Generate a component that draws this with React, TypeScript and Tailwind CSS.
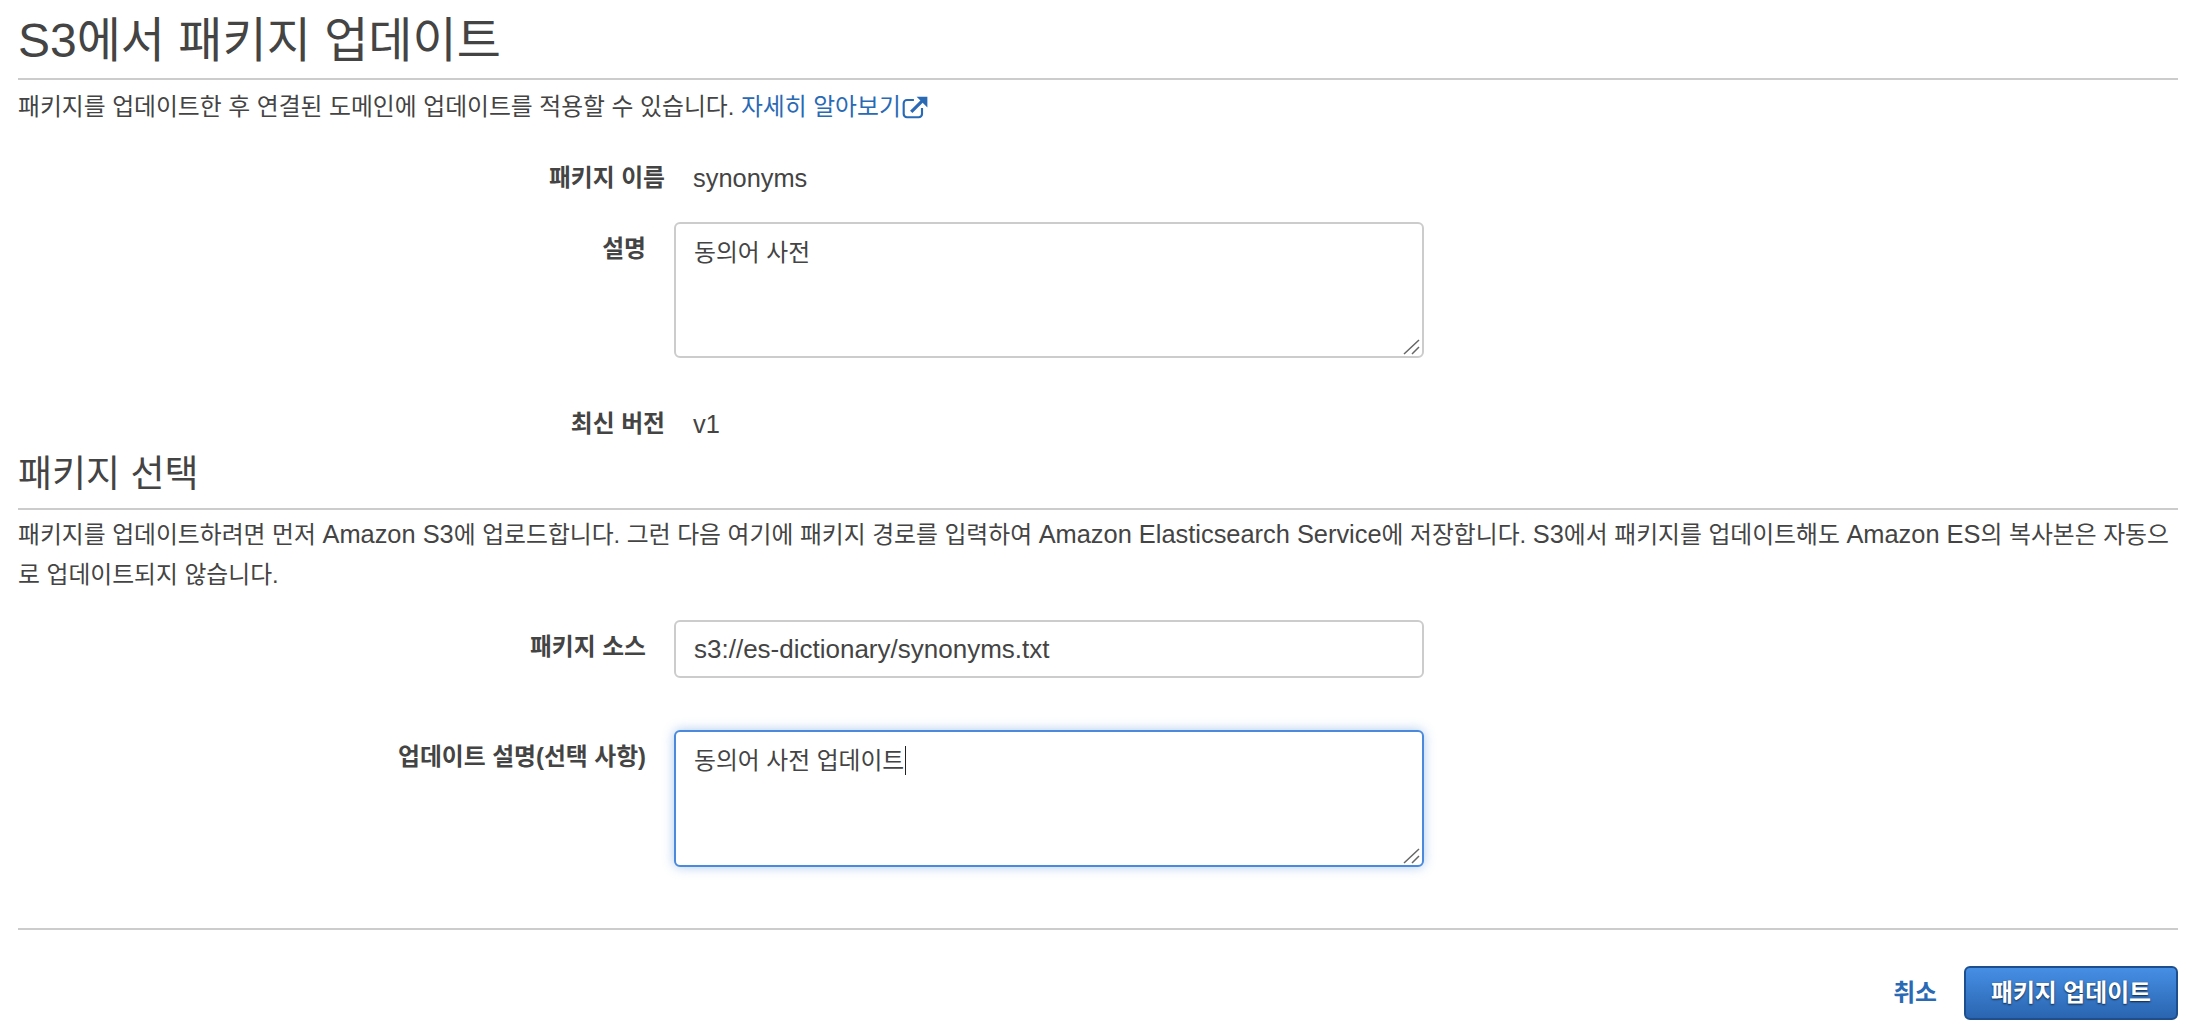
import React from 'react';

const FONT = 'font-["Liberation_Sans","Noto_Sans_CJK_KR",sans-serif]';

function ExternalIcon() {
  return (
    <svg viewBox="0 0 26 24" className="inline-block h-[26px] w-[28px] align-[-5px]" fill="none">
      <path d="M12 5.5H5.5a3 3 0 0 0-3 3v10a3 3 0 0 0 3 3h11a3 3 0 0 0 3-3V13" stroke="#2a6ab5" strokeWidth="2" />
      <path d="M9.5 16.5 20 6" stroke="#2a6ab5" strokeWidth="3" />
      <path d="M14.5 2.5h10v10z" fill="#2a6ab5" />
    </svg>
  );
}

function ResizeGrip() {
  return (
    <svg viewBox="0 0 18 16" className="pointer-events-none absolute right-[3px] bottom-[3px] h-[16px] w-[18px]" fill="none">
      <path d="M1 15 16 1M9 15l7-7" stroke="#666" strokeWidth="1.5" />
    </svg>
  );
}

function Latin({ children }: { children: React.ReactNode }) {
  return <span className="text-[25.4px]">{children}</span>;
}

function StaticRow({ label, value, className }: { label: string; value: string; className?: string }) {
  return (
    <div className={`flex items-center ${className ?? ''}`}>
      <div className="w-[647px] text-right font-bold">{label}</div>
      <div className="ml-[28px] text-[25.4px]">{value}</div>
    </div>
  );
}

function FieldRow({ label, children, className }: { label: string; children: React.ReactNode; className?: string }) {
  return (
    <div className={`flex items-start ${className ?? ''}`}>
      <div className="w-[628px] pt-[13px] text-right font-bold leading-[28px]">{label}</div>
      <div className="relative ml-[28px] w-[750px]">{children}</div>
    </div>
  );
}

export default function App() {
  return (
    <div className={`${FONT} h-[1034px] w-[2196px] overflow-hidden bg-white px-[18px] text-[23.8px] leading-[28px] text-[#444]`}>
      <h1 className="h-[80px] border-b-2 border-[#ccc] pt-[13px] text-[48px] leading-[56px] font-normal">S3에서 패키지 업데이트</h1>
      <p className="mt-[13px]">
        패키지를 업데이트한 후 연결된 도메인에 업데이트를 적용할 수 있습니다.{' '}
        <a className="text-[#2a6ab5]">자세히 알아보기<ExternalIcon /></a>
      </p>

      <StaticRow label="패키지 이름" value="synonyms" className="mt-[43px]" />
      <FieldRow label="설명" className="mt-[30px]">
        <textarea
          readOnly
          defaultValue="동의어 사전"
          className="block h-[136px] w-full resize-none rounded-[6px] border-2 border-[#ccc] bg-white px-[18px] pt-[15px] text-[#444] outline-none"
        />
        <ResizeGrip />
      </FieldRow>
      <StaticRow label="최신 버전" value="v1" className="mt-[52px]" />

      <h2 className="mt-[15px] h-[57px] border-b-2 border-[#ccc] text-[37px] leading-[44px] font-normal">패키지 선택</h2>
      <p className="mt-[4px] leading-[40px]">
        패키지를 업데이트하려면 먼저 <Latin>Amazon S3</Latin>에 업로드합니다. 그런 다음 여기에 패키지 경로를 입력하여 <Latin>Amazon Elasticsearch Service</Latin>에 저장합니다. <Latin>S3</Latin>에서 패키지를 업데이트해도 <Latin>Amazon ES</Latin>의 복사본은 자동으로 업데이트되지 않습니다.
      </p>

      <FieldRow label="패키지 소스" className="mt-[25px]">
        <input
          readOnly
          defaultValue="s3://es-dictionary/synonyms.txt"
          className="block h-[58px] w-full rounded-[6px] border-2 border-[#ccc] bg-white px-[18px] text-[26px] text-[#444] outline-none"
        />
      </FieldRow>
      <FieldRow label="업데이트 설명(선택 사항)" className="mt-[52px]">
        <textarea
          readOnly
          defaultValue="동의어 사전 업데이트"
          className="block h-[137px] w-full resize-none rounded-[6px] border-2 border-[#4a89dc] bg-white px-[18px] pt-[15px] text-[#444] shadow-[0_0_12px_rgba(74,137,220,0.45)] outline-none"
        />
        <ResizeGrip />
        <span className="absolute top-[16px] left-[231px] h-[29px] w-px bg-[#222]" />
      </FieldRow>

      <div className="mt-[61px] border-t-2 border-[#ccc]" />
      <div className="mt-[36px] flex items-center justify-end gap-[27px]">
        <a className="font-bold text-[#2a6ab5]">취소</a>
        <button className="h-[54px] w-[214px] rounded-[6px] border-2 border-[#1d4f8f] bg-gradient-to-b from-[#468fe5] to-[#2a65b0] font-bold text-white [text-shadow:0_1px_2px_rgba(0,0,0,0.7)]">
          패키지 업데이트
        </button>
      </div>
    </div>
  );
}
